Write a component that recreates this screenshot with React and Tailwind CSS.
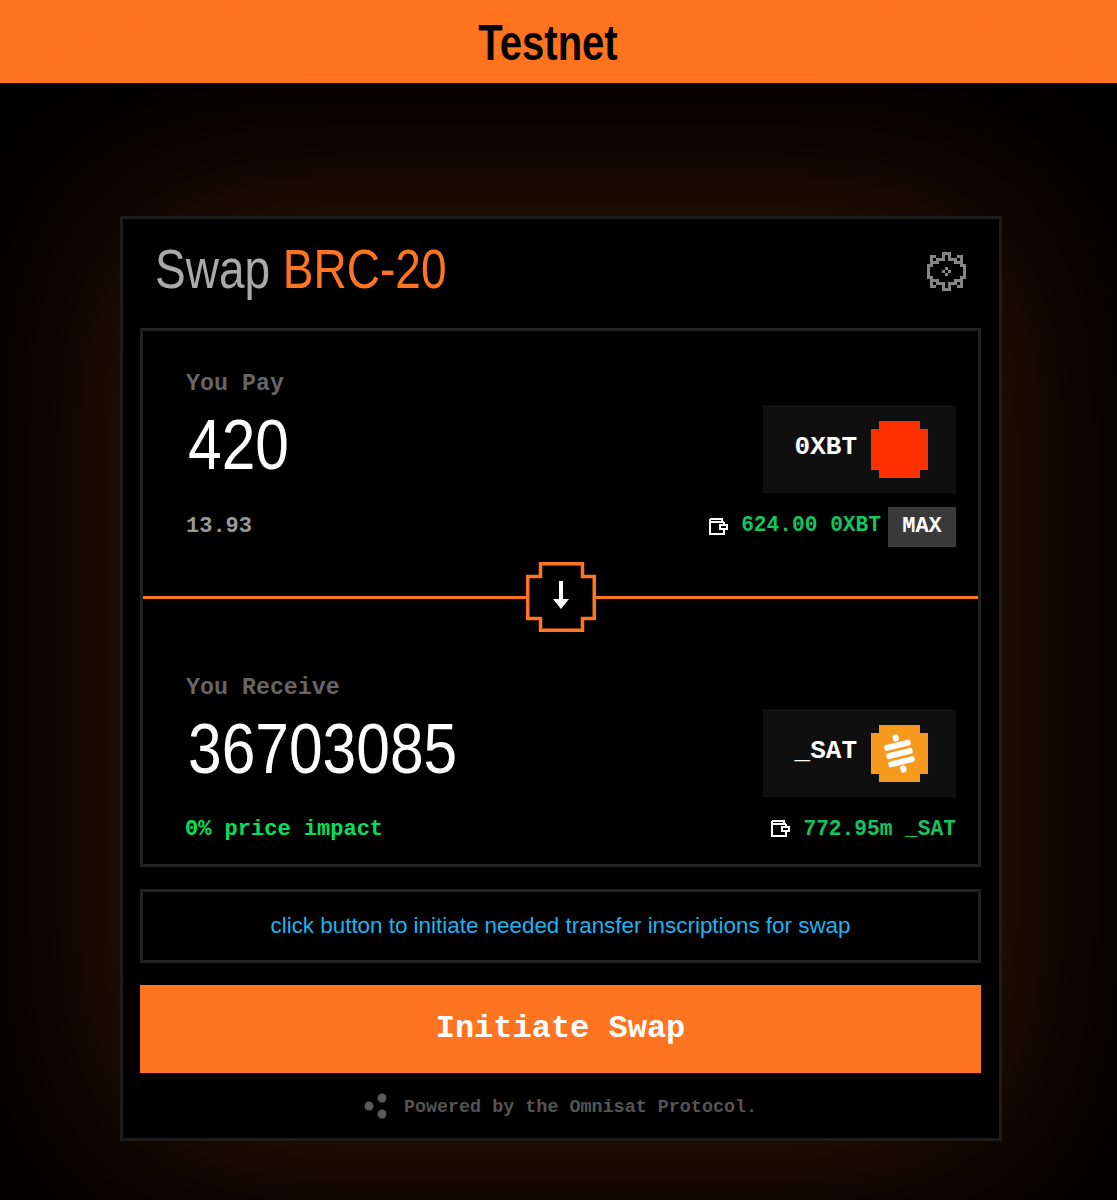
const mono = 'font-["Liberation_Mono",monospace]';

const gearRows = [
    '.....###.....',
    '.##..#.#..##.',
    '.#.###.###.#.',
    '.###.....###.',
    '##.........##',
    '#.....#.....#',
    '#....#.#....#',
    '#.....#.....#',
    '##.........##',
    '.###.....###.',
    '.#.###.###.#.',
    '.##..#.#..##.',
    '.....###.....',
];

function GearIcon() {
    return (
        <svg className="-mt-[4px]" width="39" height="39" viewBox="0 0 13 13" fill="#858585" shapeRendering="crispEdges">
            {gearRows.map((row, y) =>
                row.split('').map((c, x) => (c === '#' ? <rect key={`${x}-${y}`} x={x} y={y} width="1" height="1" /> : null))
            )}
        </svg>
    );
}

function WalletIcon() {
    return (
        <svg width="19" height="17" viewBox="0 0 19 17" fill="none" stroke="white" strokeWidth="2" shapeRendering="crispEdges">
            <path d="M1 1H13V4M1 1V16H15V12M15 4H1M15 4V7" />
            <path d="M18 7H11V11H18Z" />
        </svg>
    );
}

const tokenShape = '0,8 8,8 8,0 49,0 49,8 57,8 57,49 49,49 49,57 8,57 8,49 0,49';

function RedToken() {
    return (
        <svg width="57" height="57" viewBox="0 0 57 57">
            <polygon points={tokenShape} fill="#ff3000" />
        </svg>
    );
}

function SatToken() {
    return (
        <svg width="57" height="57" viewBox="0 0 57 57">
            <polygon points={tokenShape} fill="#f7991c" />
            <g fill="white" transform="rotate(-14 28.5 28.5)">
                <rect x="25.5" y="9" width="6" height="7" rx="2.5" />
                <rect x="15" y="17" width="27" height="6" rx="2.5" />
                <rect x="15" y="25.5" width="27" height="6" rx="2.5" />
                <rect x="15" y="34" width="27" height="6" rx="2.5" />
                <rect x="25.5" y="41" width="6" height="7" rx="2.5" />
            </g>
        </svg>
    );
}

function SwitchButton() {
    return (
        <svg className="block" width="70" height="70" viewBox="0 0 70 70">
            <polygon
                points="14.5,1.75 56.5,1.75 56.5,14.5 68.25,14.5 68.25,56.5 56.5,56.5 56.5,68.25 14.5,68.25 14.5,56.5 1.75,56.5 1.75,14.5 14.5,14.5"
                fill="black"
                stroke="#ff7420"
                strokeWidth="3.5"
            />
            <rect x="33" y="19" width="4" height="20" fill="white" />
            <polygon points="27,37 43,37 35,47" fill="white" />
        </svg>
    );
}

function TokenBox({ symbol, children }) {
    return (
        <div className="w-[193px] h-[88px] bg-[#0f0f0f] flex items-center justify-end gap-[14px] pr-[28px]">
            <span className={`${mono} font-bold text-[26px] leading-none text-white -translate-y-[2px]`}>{symbol}</span>
            {children}
        </div>
    );
}

function Amount({ children }) {
    return (
        <div className='font-["Liberation_Sans",sans-serif] text-[60.5px] leading-none text-white origin-left scale-y-[1.15] pl-[2px] -translate-y-[4px]'>
            {children}
        </div>
    );
}

function Label({ children }) {
    return <div className={`${mono} font-bold text-[23.3px] leading-[24px] text-[#666]`}>{children}</div>;
}

function Balance({ children, textClass }) {
    return (
        <div className="flex items-center gap-[13px]">
            <WalletIcon />
            <span className={`${mono} font-bold text-[21.2px] leading-none text-[#14c45f] ${textClass}`}>{children}</span>
        </div>
    );
}

export default function App() {
    return (
        <div className="min-h-[1200px] bg-black overflow-hidden">
            <div className="h-[83px] bg-[#ff7420] flex items-center justify-center pr-[21px]">
                <span className='font-["Liberation_Sans",sans-serif] text-[40px] leading-none font-bold text-black scale-y-[1.25]'>Testnet</span>
            </div>

            <div className="ml-[120px] mt-[133px] w-[882px] h-[925px] bg-black border-[3px] border-[#1c1c1c] pl-[17px] pr-[18px] shadow-[0_0_190px_rgba(255,110,20,0.23)]">
                <div className="h-[109px] flex items-center justify-between pl-[15px] pr-[15px]">
                    <h1 className='font-["Liberation_Sans",sans-serif] text-[46px] leading-none text-[#aaa] scale-y-[1.2] origin-center -mt-[9px]'>
                        Swap <span className="text-[#ff7420]">BRC-20</span>
                    </h1>
                    <GearIcon />
                </div>

                <div className="border-[3px] border-[#222]">
                    <div className="h-[265px] pt-[41px] pl-[43px] pr-[22px]">
                        <Label>You Pay</Label>
                        <div className="mt-[9px] flex items-center justify-between">
                            <Amount>420</Amount>
                            <TokenBox symbol="0XBT">
                                <RedToken />
                            </TokenBox>
                        </div>
                        <div className="mt-[14px] h-[40px] flex items-center justify-between">
                            <span className={`${mono} font-bold text-[22px] leading-none text-[#999]`}>13.93</span>
                            <div className="flex items-center gap-[7px]">
                                <Balance textClass="-translate-y-[1px]">624.00 0XBT</Balance>
                                <span className={`${mono} font-bold w-[68px] h-[40px] bg-[#3a3a3a] flex items-center justify-center text-[22px] leading-none text-white`}>MAX</span>
                            </div>
                        </div>
                    </div>

                    <div className="relative h-[3px] bg-[#ff7420]">
                        <div className="absolute left-1/2 top-1/2 -translate-x-1/2 -translate-y-1/2 -mt-[1px]">
                            <SwitchButton />
                        </div>
                    </div>

                    <div className="h-[265px] pt-[77px] pl-[43px] pr-[22px]">
                        <Label>You Receive</Label>
                        <div className="mt-[9px] flex items-center justify-between">
                            <Amount>36703085</Amount>
                            <TokenBox symbol="_SAT">
                                <SatToken />
                            </TokenBox>
                        </div>
                        <div className="mt-[12px] h-[40px] flex items-center justify-between">
                            <span className={`${mono} font-bold text-[22px] leading-none text-[#00e25f] translate-y-[1px] -ml-[1px]`}>0% price impact</span>
                            <Balance textClass="translate-y-[1px]">772.95m _SAT</Balance>
                        </div>
                    </div>
                </div>

                <div className="mt-[22px] h-[74px] border-[3px] border-[#222] flex items-center justify-center">
                    <span className='font-["Liberation_Sans",sans-serif] text-[22.4px] leading-none text-[#1cb4f2]'>
                        click button to initiate needed transfer inscriptions for swap
                    </span>
                </div>

                <button className={`${mono} font-bold mt-[22px] w-full h-[88px] bg-[#ff7420] text-white text-[32px] leading-none`}>
                    Initiate Swap
                </button>

                <div className="h-[65px] flex items-center justify-center gap-[14px]">
                    <svg width="26" height="26" viewBox="0 0 26 26" fill="#5a5a5a">
                        <circle cx="5" cy="13" r="4.5" />
                        <circle cx="18" cy="5" r="4.5" />
                        <circle cx="18" cy="21" r="4.5" />
                    </svg>
                    <span className={`${mono} font-bold text-[18.4px] leading-none text-[#555] translate-y-[3px]`}>Powered by the Omnisat Protocol.</span>
                </div>
            </div>
        </div>
    );
}
